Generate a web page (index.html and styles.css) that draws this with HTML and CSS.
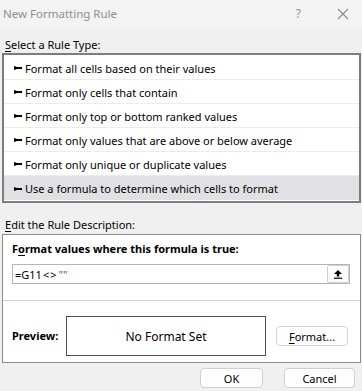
FILE: index.html
```html
<!DOCTYPE html>
<html lang="en">
  <head>
    <meta charset="UTF-8" />
    <title>New Formatting Rule</title>
    <link rel="stylesheet" href="styles.css">
  </head>
  <body>
    <div class="dialog">
      <div class="titlebar">
        <span class="title">New Formatting Rule</span>
        <span class="help">?</span>
        <svg class="close" width="12" height="12" viewBox="0 0 12 12">
          <path d="M1 1 L11 11 M11 1 L1 11" stroke="#8a8a8a" stroke-width="1.1" fill="none" />
        </svg>
      </div>

      <div class="label"><u>S</u>elect a Rule Type:</div>
      <ul class="rules">
        <li><svg class="arrow" width="8" height="4" viewBox="0 0 8 4"><path d="M0 0 L3 1.1 L8 1.1 L8 2.9 L3 2.9 L0 4 Z" fill="#000" /></svg>Format all cells based on their values</li>
        <li><svg class="arrow" width="8" height="4" viewBox="0 0 8 4"><path d="M0 0 L3 1.1 L8 1.1 L8 2.9 L3 2.9 L0 4 Z" fill="#000" /></svg>Format only cells that contain</li>
        <li><svg class="arrow" width="8" height="4" viewBox="0 0 8 4"><path d="M0 0 L3 1.1 L8 1.1 L8 2.9 L3 2.9 L0 4 Z" fill="#000" /></svg>Format only top or bottom ranked values</li>
        <li><svg class="arrow" width="8" height="4" viewBox="0 0 8 4"><path d="M0 0 L3 1.1 L8 1.1 L8 2.9 L3 2.9 L0 4 Z" fill="#000" /></svg>Format only values that are above or below average</li>
        <li><svg class="arrow" width="8" height="4" viewBox="0 0 8 4"><path d="M0 0 L3 1.1 L8 1.1 L8 2.9 L3 2.9 L0 4 Z" fill="#000" /></svg>Format only unique or duplicate values</li>
        <li class="on"><svg class="arrow" width="8" height="4" viewBox="0 0 8 4"><path d="M0 0 L3 1.1 L8 1.1 L8 2.9 L3 2.9 L0 4 Z" fill="#000" /></svg>Use a formula to determine which cells to format</li>
      </ul>

      <div class="label label-edit"><u>E</u>dit the Rule Description:</div>
      <div class="desc">
        <div class="desc-top">
          <div class="bold">F<u>o</u>rmat values where this formula is true:</div>
          <div class="formula">
            <span class="formula-text">=G11<span class="op">&lt;&gt;</span><span class="quote">""</span></span>
            <button class="pick">
              <svg width="10" height="10" viewBox="0 0 10 10">
                <path d="M5 1 L9 5 L6.2 5 L6.2 7.5 L3.8 7.5 L3.8 5 L1 5 Z" fill="#000" />
                <rect x="1" y="8.6" width="8" height="1.2" fill="#000" />
              </svg>
            </button>
          </div>
        </div>
        <div class="preview-row">
          <span class="bold preview-label">Preview:</span>
          <div class="preview">No Format Set</div>
          <button class="btn btn-format"><u>F</u>ormat...</button>
        </div>
      </div>

      <div class="actions">
        <button class="btn btn-ok">OK</button>
        <button class="btn btn-cancel">Cancel</button>
      </div>
    </div>
  </body>
</html>
```

FILE: styles.css
```css
* {
  margin: 0;
  padding: 0;
  box-sizing: border-box;
}
body {
  background: #f0f0f0;
  font-family: "Noto Sans", "Open Sans", sans-serif;
  font-size: 11px;
  color: #000;
}
u {
  text-decoration-thickness: 1px;
  text-underline-offset: 2px;
}
.titlebar {
  height: 27px;
  background: #f3f3f3;
  display: flex;
  align-items: center;
  padding: 0 0 0 3px;
  color: #8f8f8f;
}
.title {
  flex: 1;
  font-size: 11.5px;
}
.help {
  font-size: 12px;
  margin-right: 36px;
}
.close {
  margin-right: 13px;
}
.label {
  height: 26px;
  padding: 10px 0 0 5px;
  line-height: 16px;
}
.label-edit {
  height: 31px;
  padding-top: 14px;
}
.rules {
  list-style: none;
  margin: 0 1px 0 2px;
  background: #fff;
  border: 2px solid #7d7d7d;
  padding: 1px 0;
}
.rules li {
  height: 24px;
  display: flex;
  align-items: center;
  padding: 1px 0 0 10px;
  border-bottom: 1px solid #ececec;
}
.rules li:last-child {
  border-bottom: 0;
}
.rules li.on {
  background: #e1e0e4;
}
.arrow {
  margin-right: 3px;
}
.desc {
  margin: 0 1px 0 2px;
  background: #fff;
  border: 1px solid #8a8a8a;
  height: 129px;
}
.desc-top {
  padding: 6px 10px 0 9px;
  height: 66px;
  border-bottom: 1px solid #d4d4d4;
}
.bold {
  font-weight: bold;
  line-height: 16px;
}
.formula {
  margin-top: 7px;
  height: 20px;
  border: 1px solid #b4b4b4;
  display: flex;
  align-items: center;
  justify-content: space-between;
  padding: 0 0 0 2px;
}
.formula-text {
  font-size: 11px;
}
.op {
  margin-left: 1px;
  letter-spacing: 1px;
}
.quote {
  color: #4a5a8a;
  margin-left: 1px;
}
.pick {
  width: 22px;
  height: 18px;
  border: 1px solid #cfcfcf;
  border-radius: 2px;
  background: #fdfdfd;
  display: flex;
  align-items: center;
  justify-content: center;
}
.preview-row {
  display: flex;
  align-items: center;
  padding: 15px 0 0 9px;
}
.preview-label {
  width: 54px;
}
.preview {
  width: 200px;
  height: 40px;
  border: 1px solid #505050;
  display: flex;
  align-items: center;
  justify-content: center;
  font-size: 12px;
}
.btn {
  font-family: "Noto Sans", "Open Sans", sans-serif;
  font-size: 11px;
  color: #000;
  background: #fdfdfd;
  border: 1px solid #d0d0d0;
  border-radius: 4px;
  height: 20px;
}
.btn-format {
  width: 72px;
  margin-left: 10px;
}
.actions {
  display: flex;
  justify-content: flex-end;
  gap: 21px;
  padding: 5px 7px 0 0;
}
.btn-ok {
  width: 63px;
}
.btn-cancel {
  width: 71px;
}
```
